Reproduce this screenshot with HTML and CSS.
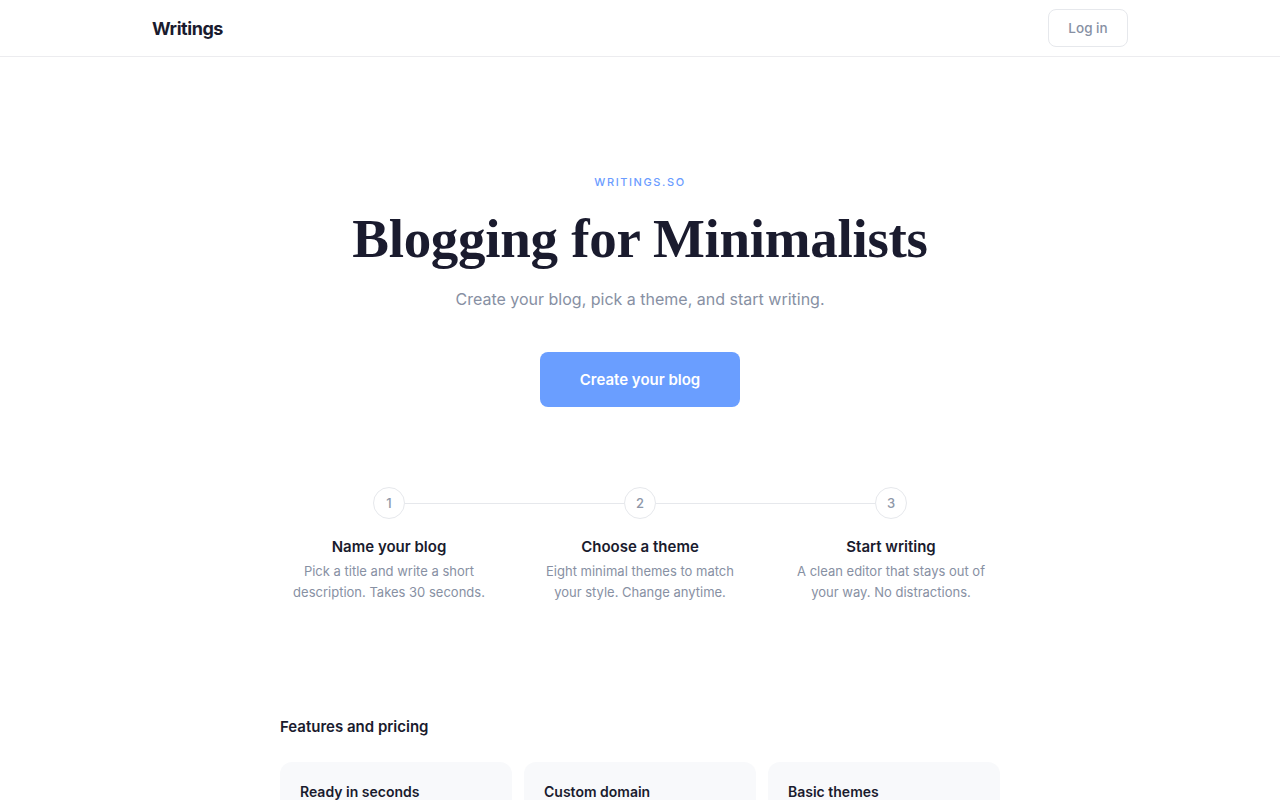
FILE: index.html
```html
<!DOCTYPE html>
<html lang="en">
<head>
<meta charset="utf-8">
<title>Writings</title>
<link rel="stylesheet" href="styles.css">
</head>
<body>
<header class="topbar">
  <div class="topbar-inner">
    <a class="logo" href="#">Writings</a>
    <a class="login" href="#">Log in</a>
  </div>
</header>
<main>
  <section class="hero">
    <div class="eyebrow">WRITINGS.SO</div>
    <h1 class="title">Blogging for Minimalists</h1>
    <p class="subtitle">Create your blog, pick a theme, and start writing.</p>
    <a class="cta" href="#">Create your blog</a>
  </section>
  <section class="steps">
    <div class="step first">
      <div class="marker"><span class="line"></span><span class="num">1</span><span class="line"></span></div>
      <h3 class="step-title">Name your blog</h3>
      <p class="step-desc">Pick a title and write a short description. Takes 30 seconds.</p>
    </div>
    <div class="step">
      <div class="marker"><span class="line"></span><span class="num">2</span><span class="line"></span></div>
      <h3 class="step-title">Choose a theme</h3>
      <p class="step-desc">Eight minimal themes to match your style. Change anytime.</p>
    </div>
    <div class="step last">
      <div class="marker"><span class="line"></span><span class="num">3</span><span class="line"></span></div>
      <h3 class="step-title">Start writing</h3>
      <p class="step-desc">A clean editor that stays out of your way. No distractions.</p>
    </div>
  </section>
  <section class="features">
    <h2 class="features-title">Features and pricing</h2>
    <div class="cards">
      <div class="card"><h4 class="card-title">Ready in seconds</h4></div>
      <div class="card"><h4 class="card-title">Custom domain</h4></div>
      <div class="card"><h4 class="card-title">Basic themes</h4></div>
    </div>
  </section>
</main>
</body>
</html>
```

FILE: styles.css
```css
* { box-sizing: border-box; }
html, body { margin: 0; padding: 0; }
body {
  font-family: Inter, "Noto Sans", "Liberation Sans", sans-serif;
  color: #1a1b2e;
  background: #ffffff;
}
a { text-decoration: none; }

.topbar {
  height: 57px;
  border-bottom: 1px solid #ececef;
}
.topbar-inner {
  max-width: 976px;
  margin: 0 auto;
  height: 56px;
  display: flex;
  align-items: center;
  justify-content: space-between;
}
.logo {
  font-size: 18px;
  font-weight: 700;
  color: #1a1b2e;
  letter-spacing: -0.45px;
}
.login {
  width: 80px;
  height: 38px;
  margin-top: -1px;
  display: flex;
  align-items: center;
  justify-content: center;
  border: 1px solid #e6e8ec;
  border-radius: 8px;
  font-size: 13.5px;
  font-weight: 500;
  color: #8790a3;
}

.hero {
  padding-top: 117px;
  display: flex;
  flex-direction: column;
  align-items: center;
  text-align: center;
}
.eyebrow {
  font-size: 11px;
  line-height: 16px;
  letter-spacing: 1.6px;
  font-weight: 500;
  color: #6b9cff;
}
.title {
  margin: 18px 0 0;
  font-family: "Liberation Serif", "DejaVu Serif", serif;
  font-size: 55px;
  line-height: 62px;
  font-weight: 700;
  color: #1a1b2e;
  letter-spacing: -0.3px;
}
.subtitle {
  margin: 17px 0 0;
  font-size: 16px;
  line-height: 24px;
  color: #8790a3;
}
.cta {
  margin-top: 41px;
  width: 200px;
  height: 55px;
  display: flex;
  align-items: center;
  justify-content: center;
  background: #6a9eff;
  border-radius: 8px;
  color: #ffffff;
  font-size: 15px;
  font-weight: 600;
}

.steps {
  width: 753px;
  margin: 80px auto 0;
  display: grid;
  grid-template-columns: repeat(3, 1fr);
}
.step {
  display: flex;
  flex-direction: column;
  align-items: center;
  text-align: center;
}
.marker {
  width: 100%;
  display: flex;
  align-items: center;
}
.line {
  flex: 1;
  height: 1px;
  background: #e6e8ec;
}
.first .line:first-child,
.last .line:last-child { background: transparent; }
.num {
  width: 32px;
  height: 32px;
  border: 1px solid #e6e8ec;
  border-radius: 50%;
  display: flex;
  align-items: center;
  justify-content: center;
  font-size: 13px;
  font-weight: 500;
  color: #8e97a8;
}
.step-title {
  margin: 17px 0 0;
  font-size: 15px;
  line-height: 22px;
  font-weight: 600;
  color: #1a1b2e;
}
.step-desc {
  margin: 3px 0 0;
  width: 200px;
  font-size: 13px;
  line-height: 21px;
  color: #8790a3;
}

.features {
  width: 720px;
  margin: 113px auto 0;
}
.features-title {
  margin: 0;
  font-size: 15px;
  line-height: 22px;
  font-weight: 600;
  color: #1a1b2e;
}
.cards {
  margin-top: 24px;
  display: grid;
  grid-template-columns: repeat(3, 1fr);
  gap: 12px;
}
.card {
  background: #f8f9fb;
  border-radius: 12px;
  padding: 20px;
  height: 140px;
}
.card-title {
  margin: 0;
  font-size: 14px;
  line-height: 20px;
  font-weight: 600;
  color: #1a1b2e;
}
```
